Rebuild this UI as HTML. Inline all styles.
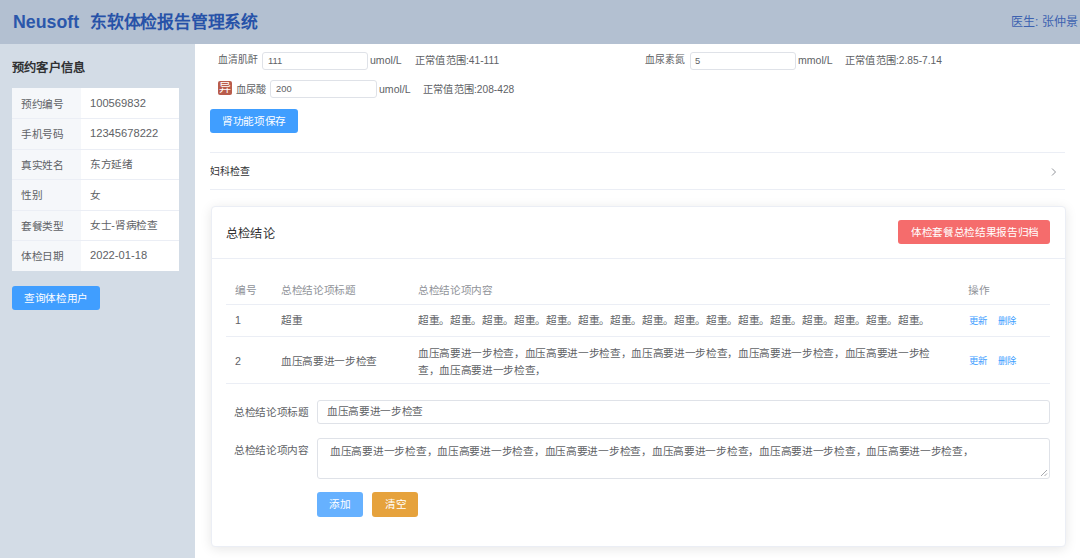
<!DOCTYPE html>
<html lang="zh-CN"><head><meta charset="utf-8">
<style>
*{box-sizing:border-box;margin:0;padding:0}
html,body{width:1080px;height:558px;overflow:hidden;background:#fff;font-family:"Liberation Sans",sans-serif;color:#606266;position:relative}
.t{position:absolute;white-space:nowrap;line-height:1}
.box{position:absolute}
.btn{position:absolute;color:#fff;border-radius:3px;text-align:center;white-space:nowrap}
.inp{position:absolute;border:1px solid #dfe2e8;border-radius:3px;background:#fff}
.hl{position:absolute;height:1px;background:#ebeef5}
.lbl{position:absolute;left:0;width:69px;background:#f5f7fa}
.row{position:absolute;left:0;width:167px;height:1px;background:#ebeef5}
.g{color:#606266}
.lnk{color:#409eff}
.z{transform-origin:0 0}
.z12{font-size:12px;transform:scale(.8889)}
.z14{font-size:14px;transform:scale(.8889)}
.z20{font-size:20px;transform:scale(.8889)}
.zs{font-size:12px;transform:scale(.85)}
.zl{font-size:12px;transform:scale(.78)}
</style></head><body>
<!-- header -->
<div class="box" style="left:0;top:0;width:1080px;height:44px;background:#b3c0d1"></div>
<div class="t z z20" id="h1" style="left:13px;top:12.7px;font-weight:bold;color:#2b57ab">Neusoft</div>
<div class="t z z20" id="h2" style="transform:scale(.84);left:90px;top:14px;font-weight:bold;color:#2752a8">东软体检报告管理系统</div>
<div class="t" id="doc" style="font-size:12px;left:1011px;top:16px;color:#3d62b0">医生: 张仲景</div>

<!-- aside -->
<div class="box" style="left:0;top:44px;width:195px;height:514px;background:#d3dce6"></div>
<div class="t z z14" id="at" style="transform:scale(.873);left:12px;top:61.5px;font-weight:bold;color:#303133">预约客户信息</div>
<div class="box" style="left:12px;top:87.5px;width:167px;height:183px;background:#fff">
  <div class="lbl" style="top:0;height:183px"></div>
  <div class="row" style="top:30.5px"></div>
  <div class="row" style="top:61px"></div>
  <div class="row" style="top:91.5px"></div>
  <div class="row" style="top:122px"></div>
  <div class="row" style="top:152.5px"></div>
</div>
<div class="t z z12" id="l1" style="left:21px;top:98.5px;font-weight:500">预约编号</div>
<div class="t z z12" id="v1" style="transform:scale(.93);left:90px;top:97.5px">100569832</div>
<div class="t z z12" id="l2" style="left:21px;top:129.0px;font-weight:500">手机号码</div>
<div class="t z z12" id="v2" style="transform:scale(.93);left:90px;top:128.0px">12345678222</div>
<div class="t z z12" id="l3" style="left:21px;top:159.5px;font-weight:500">真实姓名</div>
<div class="t z z12" id="v3" style="left:90px;top:159px">东方延绪</div>
<div class="t z z12" id="l4" style="left:21px;top:190.0px;font-weight:500">性别</div>
<div class="t z z12" id="v4" style="left:90px;top:189.5px">女</div>
<div class="t z z12" id="l5" style="left:21px;top:220.5px;font-weight:500">套餐类型</div>
<div class="t z z12" id="v5" style="left:90px;top:220px">女士-肾病检查</div>
<div class="t z z12" id="l6" style="left:21px;top:251.0px;font-weight:500">体检日期</div>
<div class="t z z12" id="v6" style="transform:scale(.93);left:90px;top:250.0px">2022-01-18</div>
<div class="box" style="left:12px;top:286px;width:88px;height:24px;border-radius:3px;background:#409eff"></div>
<div class="t z z12" id="b1" style="left:24px;top:293px;color:#fff">查询体检用户</div>

<!-- main top form -->
<div class="t z zs" id="f1" style="transform:scale(.82);left:218px;top:55px">血清肌酐</div>
<div class="inp" style="left:261.5px;top:52px;width:106px;height:17.5px"></div>
<div class="t z zl" id="f1v" style="left:268px;top:56px">111</div>
<div class="t z zs" id="f1u" style="transform:scale(.88);left:370px;top:55px">umol/L</div>
<div class="t z zs" id="f1r" style="left:415px;top:55px">正常值范围:41-111</div>

<div class="t z zs" id="f2" style="transform:scale(.82);left:645px;top:55px">血尿素氮</div>
<div class="inp" style="left:689.5px;top:52px;width:106px;height:17.5px"></div>
<div class="t z zl" id="f2v" style="left:695px;top:56px">5</div>
<div class="t z zs" id="f2u" style="transform:scale(.88);left:797.5px;top:55px">mmol/L</div>
<div class="t z zs" id="f2r" style="left:845px;top:55px">正常值范围:2.85-7.14</div>

<div class="box" style="left:218px;top:81px;width:14px;height:14px;background:#b95c4b;border-radius:2px"></div>
<div class="t" id="yi" style="font-size:12px;left:219px;top:82px;color:#fff">异</div>
<div class="t z zs" id="f3" style="left:236px;top:83.5px">血尿酸</div>
<div class="inp" style="left:269.5px;top:80px;width:107px;height:17.5px"></div>
<div class="t z zl" id="f3v" style="left:276px;top:84px">200</div>
<div class="t z zs" id="f3u" style="transform:scale(.88);left:378.5px;top:83.5px">umol/L</div>
<div class="t z zs" id="f3r" style="left:423px;top:83.5px">正常值范围:208-428</div>

<div class="box" style="left:210px;top:109px;width:88px;height:24px;border-radius:3px;background:#409eff"></div>
<div class="t z z12" id="b2" style="left:222px;top:116px;color:#fff">肾功能项保存</div>

<div class="hl" style="left:210px;top:152px;width:855px"></div>
<div class="t z z12" id="fk" style="transform:scale(.825);left:210px;top:166.5px;color:#303133">妇科检查</div>
<svg class="box" style="left:1050px;top:167px" width="8" height="10" viewBox="0 0 8 10"><path d="M2 1.5 L5.5 5 L2 8.5" fill="none" stroke="#909399" stroke-width="1"/></svg>
<div class="hl" style="left:210px;top:189px;width:855px"></div>

<!-- card -->
<div class="box" style="left:210.5px;top:205.5px;width:855px;height:341px;border:1px solid #ebeef5;border-radius:4px;background:#fff;box-shadow:0 2px 12px 0 rgba(0,0,0,.1)"></div>
<div class="t z z14" id="zj" style="transform:scale(.87);left:226px;top:227.5px;color:#303133">总检结论</div>
<div class="box" style="left:898px;top:220px;width:152px;height:24px;border-radius:3px;background:#f56c6c"></div>
<div class="t z z12" id="b3" style="left:911px;top:227px;color:#fff">体检套餐总检结果报告归档</div>
<div class="hl" style="left:211px;top:258px;width:854px"></div>

<div class="t z z12" id="th1" style="left:235px;top:284.5px;font-weight:500;color:#909399">编号</div>
<div class="t z z12" id="th2" style="left:281px;top:284.5px;font-weight:500;color:#909399">总检结论项标题</div>
<div class="t z z12" id="th3" style="left:418px;top:284.5px;font-weight:500;color:#909399">总检结论项内容</div>
<div class="t z z12" id="th4" style="left:968px;top:284.5px;font-weight:500;color:#909399">操作</div>
<div class="hl" style="left:226px;top:304px;width:824px"></div>

<div class="t z z12" id="r1a" style="left:235px;top:315px">1</div>
<div class="t z z12" id="r1b" style="left:281px;top:315px">超重</div>
<div class="t z z12" id="r1c" style="left:418px;top:315px">超重。超重。超重。超重。超重。超重。超重。超重。超重。超重。超重。超重。超重。超重。超重。超重。</div>
<div class="t z zl lnk" id="r1u" style="left:968.5px;top:316px">更新</div>
<div class="t z zl lnk" id="r1d" style="left:998px;top:316px">删除</div>
<div class="hl" style="left:226px;top:336px;width:824px"></div>

<div class="t z z12" id="r2a" style="left:235px;top:356px">2</div>
<div class="t z z12" id="r2b" style="left:281px;top:356px">血压高要进一步检查</div>
<div class="t z z12" id="r2c" style="left:418px;top:344.5px;line-height:19.5px">血压高要进一步检查，血压高要进一步检查，血压高要进一步检查，血压高要进一步检查，血压高要进一步检<br>查，血压高要进一步检查，</div>
<div class="t z zl lnk" id="r2u" style="left:968.5px;top:356px">更新</div>
<div class="t z zl lnk" id="r2d" style="left:998px;top:356px">删除</div>
<div class="hl" style="left:226px;top:383px;width:824px"></div>

<!-- form -->
<div class="t z z12" id="g1" style="left:233.5px;top:406.5px">总检结论项标题</div>
<div class="inp" style="left:317px;top:399.5px;width:733px;height:24px"></div>
<div class="t z z12" id="g1v" style="left:326.5px;top:406px">血压高要进一步检查</div>
<div class="t z z12" id="g2" style="left:233.5px;top:445px">总检结论项内容</div>
<div class="inp" style="left:317px;top:438px;width:733px;height:41px"></div>
<div class="t z z12" id="g2v" style="transform:scale(.894);left:329.5px;top:445.5px">血压高要进一步检查，血压高要进一步检查，血压高要进一步检查，血压高要进一步检查，血压高要进一步检查，血压高要进一步检查，</div>
<svg class="box" style="left:1040px;top:469px" width="8" height="8" viewBox="0 0 8 8"><path d="M1 7 L7 1 M4.5 7 L7 4.5" stroke="#909399" stroke-width="0.8"/></svg>
<div class="box" style="left:317px;top:492px;width:46px;height:24.5px;border-radius:3px;background:#66b1ff"></div>
<div class="t z z12" id="b4" style="left:329px;top:499px;color:#fff">添加</div>
<div class="box" style="left:372px;top:492px;width:46px;height:24.5px;border-radius:3px;background:#e6a23c"></div>
<div class="t z z12" id="b5" style="left:385px;top:499px;color:#fff">清空</div>
</body></html>
